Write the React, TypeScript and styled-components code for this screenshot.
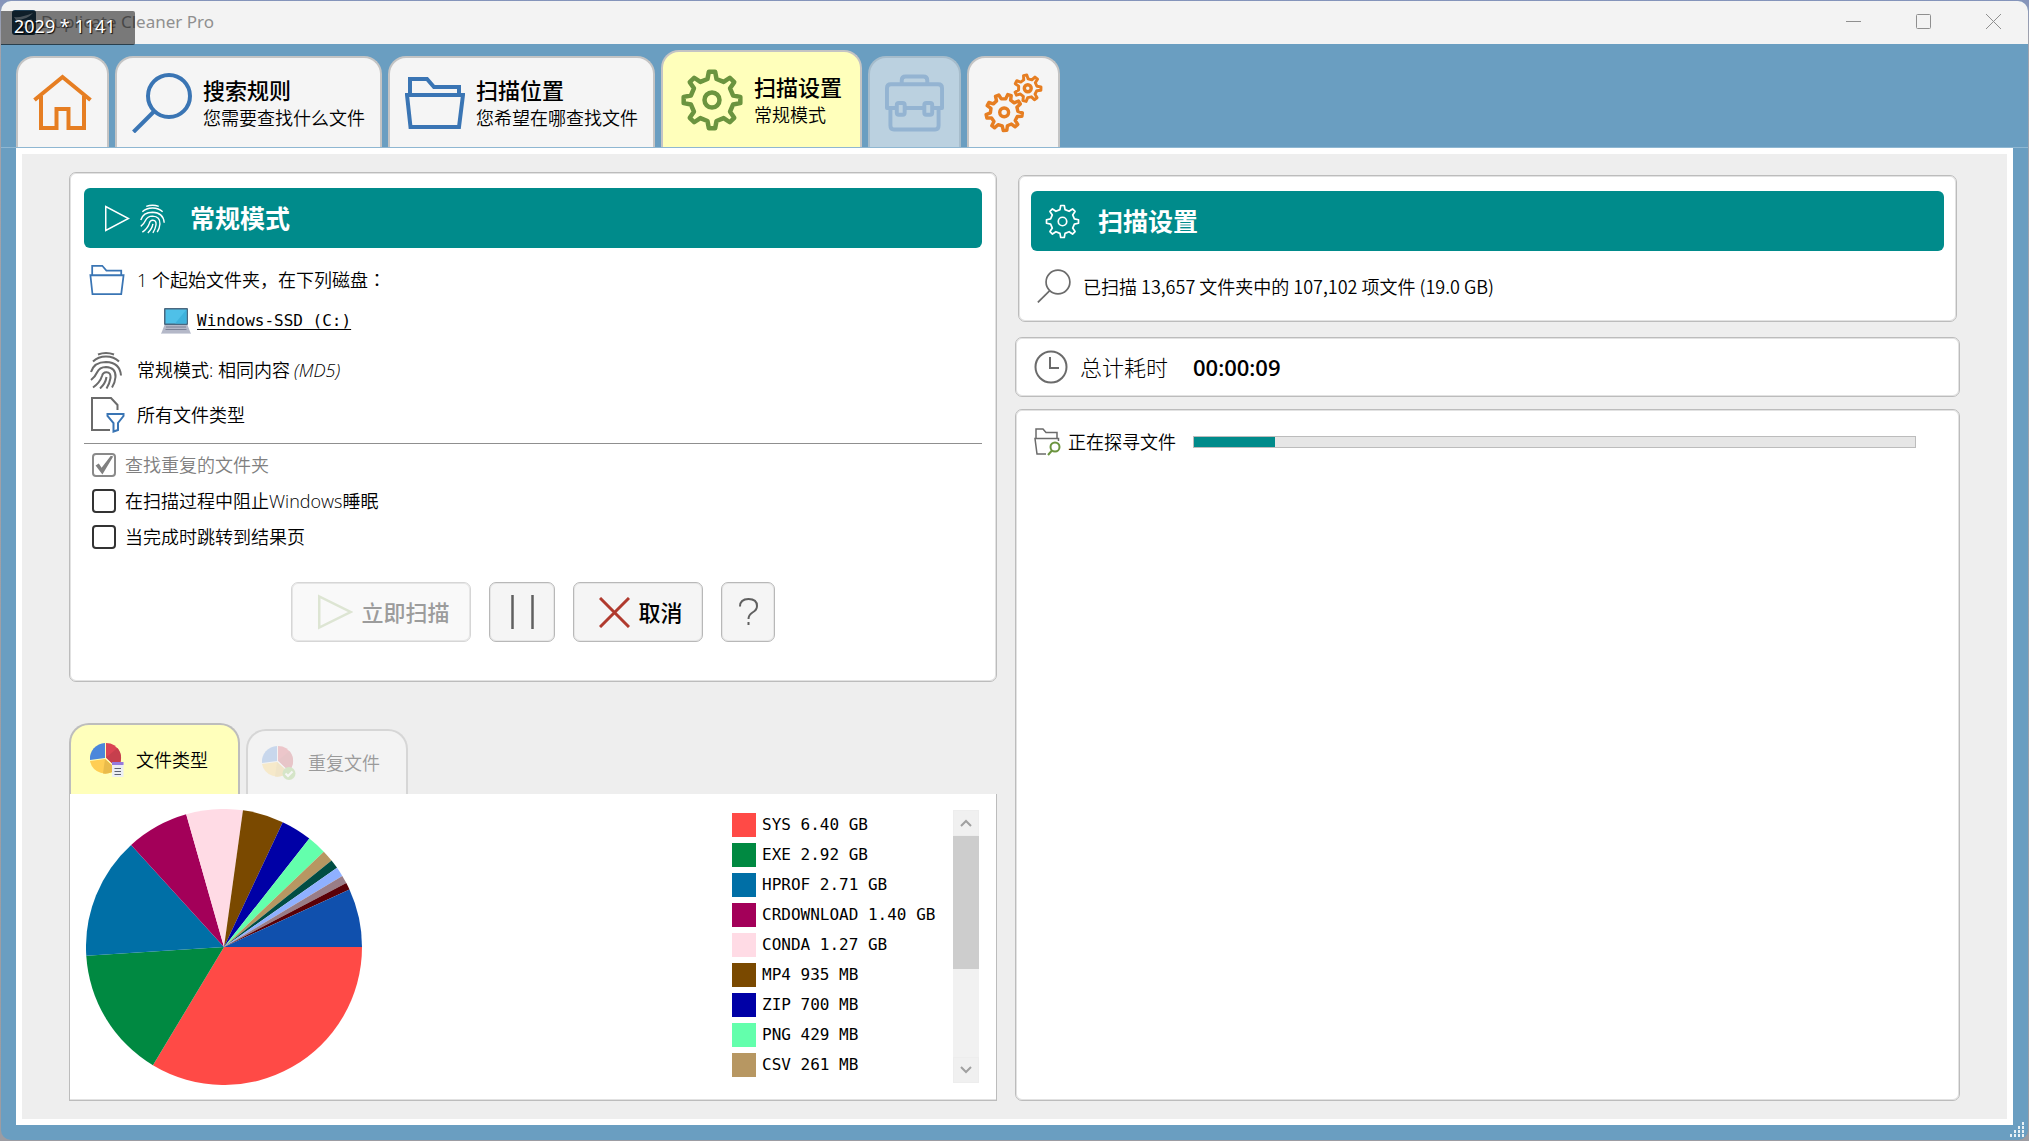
import React from "react";
import styled, { createGlobalStyle, css } from "styled-components";

const TEAL = "#008b8b";
const BLUE = "#3a75b4";
const ORANGE = "#e67e22";
const GREEN = "#6b943f";
const GREY = "#6b6b6b";

const GlobalStyle = createGlobalStyle`
  *, *::before, *::after { box-sizing: border-box; }
  body {
    margin: 0;
    font-family: "Open Sans", "Noto Sans CJK SC", sans-serif;
    font-size: 18px;
    font-weight: 350;
    line-height: 24px;
    color: #000;
  }
  button, input, progress { margin: 0; font: inherit; color: inherit; }
  svg { display: block; flex: none; }
`;

/* ---------- shell ---------- */

const Desktop = styled.div`
  min-height: 100vh;
  padding: 1px;
  display: flex;
  background: linear-gradient(#8494bb, #a3a3ab 40px, #9c9ca2);
`;

const AppWindow = styled.div`
  position: relative;
  flex: 1;
  display: flex;
  flex-direction: column;
  border-radius: 10px;
  overflow: hidden;
  background: #6a9ec1;
`;

const TitleBar = styled.header`
  height: 43px;
  display: flex;
  align-items: center;
  padding-left: 11px;
  background: #f3f3f3;
  color: #8f8f8f;
`;

const TitleText = styled.span`
  flex: 1;
  margin-left: 5px;
  padding-bottom: 2px;
  font-family: "Noto Sans", sans-serif;
  font-size: 17px;
  font-weight: 400;
`;

const CaptionButton = styled.button`
  width: 70px;
  height: 43px;
  padding: 0 0 2px;
  border: 0;
  display: flex;
  align-items: center;
  justify-content: center;
  background: transparent;
  color: #8f8f8f;
`;

const SizeBadge = styled.div`
  position: absolute;
  left: -1px;
  top: 10px;
  width: 135px;
  height: 34px;
  padding-left: 14px;
  border-radius: 0 2px 2px 0;
  background: rgba(0, 0, 0, 0.5);
  box-shadow: inset 0 -1px 0 rgba(0, 0, 0, 0.2);
  color: #fff;
  font-family: "Noto Sans", sans-serif;
  font-size: 18px;
  font-weight: 400;
  line-height: 31px;
  text-shadow: 1px 1px 1px #000;
`;

const Grip = styled.svg`
  position: absolute;
  right: 3px;
  bottom: 2px;
`;

/* ---------- main tabs ---------- */

const TabBar = styled.nav`
  height: 104px;
  padding: 0 15px;
  display: flex;
  align-items: flex-end;
  gap: 6px;
  border-bottom: 1px solid #8fb7d2;
`;

const MainTab = styled.button<{ $active?: boolean }>`
  height: ${(p) => (p.$active ? 97 : 91)}px;
  padding: 0 ${(p) => (p.$active ? 18 : 15)}px;
  display: flex;
  align-items: center;
  gap: 11px;
  border: 2px solid #c4c4c4;
  border-bottom: 0;
  border-radius: 18px 18px 0 0;
  background: ${(p) => (p.$active ? "#ffffbb" : "#f5f5f5")};
  text-align: left;
  &:disabled {
    background: #bbd1e0;
    border-color: #a6bccb;
  }
`;

const TabTitle = styled.strong`
  display: block;
  font-size: 22px;
  line-height: 28px;
  font-weight: 500;
`;

const TabNote = styled.span`
  display: block;
  margin-top: 2px;
`;

/* ---------- page ---------- */

const Page = styled.main`
  flex: 1;
  margin: 0 15px 15px;
  border: 6px solid #fff;
  padding: 18px 47px;
  display: grid;
  grid-template-columns: 928fr 945fr;
  gap: 18px;
  background: #eee;
`;

const Column = styled.div<{ $inset?: boolean }>`
  min-width: 0;
  display: flex;
  flex-direction: column;
  padding-top: ${(p) => (p.$inset ? 3 : 0)}px;
`;

const cardBorder = css`
  border: 1px solid #bcbcbc;
  box-shadow: inset 0 0 0 1px #e2e2e2;
`;

const Card = styled.section`
  ${cardBorder}
  border-radius: 7px;
  background: #fff;
`;

const ModeCard = styled(Card)`
  padding: 15px 14px 39px;
`;

const SummaryCard = styled(Card)`
  height: 147px;
  margin: 0 3px 15px;
  padding: 15px 12px;
`;

const TimeCard = styled(Card)`
  height: 60px;
  margin-bottom: 12px;
  padding-left: 18px;
  display: flex;
  align-items: center;
  font-size: 22px;
`;

const ProgressCard = styled(Card)`
  flex: 1;
  padding: 16px 43px 0 18px;
`;

const Banner = styled.h2<{ $gap: number }>`
  height: 60px;
  margin: 0;
  padding-left: ${(p) => p.$gap}px;
  display: flex;
  align-items: center;
  border-radius: 6px;
  background: ${TEAL};
  color: #fff;
  font-size: 25px;
  font-weight: 600;
  svg + svg { margin-left: 10px; }
`;

const BannerText = styled.span<{ $gap: number }>`
  margin-left: ${(p) => p.$gap}px;
`;

const InfoList = styled.div`
  padding: 9px 0 6px 5px;
  border-bottom: 1px solid #8f8f8f;
`;

const InfoRow = styled.div`
  height: 45px;
  display: flex;
  align-items: center;
`;

const DriveRow = styled.div`
  height: 38px;
  padding: 0 0 0 72px;
  margin-bottom: 7px;
  display: flex;
  align-items: center;
  gap: 6px;
`;

const DriveLink = styled.a`
  color: #000;
  font-family: "DejaVu Sans Mono", monospace;
  font-size: 16px;
  text-decoration: underline;
  text-underline-offset: 3px;
`;

const IconSlot = styled.span<{ $w: number }>`
  width: ${(p) => p.$w}px;
  flex: none;
`;

const Colon = styled.span`
  font-family: "Noto Sans CJK TC", sans-serif;
`;

const Algo = styled.em`
  margin-left: 4px;
`;

const Options = styled.div`
  padding: 3px 0 27px 8px;
`;

const Option = styled.label<{ $off?: boolean }>`
  height: 36px;
  display: flex;
  align-items: center;
  gap: 9px;
  color: ${(p) => (p.$off ? "#808080" : "#000")};
`;

const CheckBox = styled.input`
  appearance: none;
  width: 24px;
  height: 24px;
  border: 2px solid #333;
  border-radius: 4px;
  background: #fff;
  &:disabled { border-color: #8a8a8a; }
  &:checked::before {
    content: "";
    display: block;
    width: 20px;
    height: 20px;
    background: #808080;
    clip-path: polygon(8% 52%, 24% 42%, 38% 64%, 84% 4%, 96% 8%, 42% 98%);
  }
`;

const ButtonRow = styled.div`
  display: flex;
  justify-content: center;
  gap: 18px;
`;

const ToolButton = styled.button<{ $w: number }>`
  width: ${(p) => p.$w}px;
  height: 60px;
  padding: 0;
  display: flex;
  align-items: center;
  justify-content: center;
  gap: 8px;
  border: 1px solid #b8b8b8;
  border-radius: 7px;
  background: #f5f5f5;
  box-shadow: inset 0 0 0 1px #e6e6e6;
  font-size: 22px;
  font-weight: 500;
  &:disabled {
    border-color: #d6d6d6;
    background: #f9f9f9;
    color: #9c9c9c;
  }
`;

const LabelledButton = styled(ToolButton)`
  padding-left: 6px;
`;

/* ---------- lower tabs ---------- */

const ChartTabs = styled.div`
  margin-top: 41px;
  display: flex;
  align-items: flex-end;
  gap: 6px;
`;

const ChartTab = styled.button<{ $active?: boolean }>`
  height: ${(p) => (p.$active ? 71 : 65)}px;
  width: ${(p) => (p.$active ? 171 : 162)}px;
  padding: 0 0 0 ${(p) => (p.$active ? 19 : 14)}px;
  display: flex;
  align-items: center;
  gap: 12px;
  border: 2px solid ${(p) => (p.$active ? "#bdbdbd" : "#d6d6d6")};
  border-bottom: 0;
  border-radius: 20px 20px 0 0;
  background: ${(p) => (p.$active ? "#ffffbb" : "#f3f3f3")};
  &:disabled { color: #9a9a9a; }
  &:disabled svg { opacity: 0.25; }
`;

const ChartPanel = styled.section`
  ${cardBorder}
  flex: 1;
  border-top: 0;
  padding: 15px 17px 15px 16px;
  display: flex;
  background: #fff;
  box-shadow: inset 0 -1px 0 #e2e2e2;
`;

const Legend = styled.ul`
  width: 221px;
  height: 273px;
  margin: 1px 0 0 auto;
  padding: 3px 0 0;
  list-style: none;
  overflow: hidden;
  font-family: "DejaVu Sans Mono", monospace;
  font-size: 16px;
`;

const LegendItem = styled.li`
  height: 30px;
  display: flex;
  gap: 6px;
  white-space: nowrap;
`;

const Swatch = styled.span<{ $color: string }>`
  width: 24px;
  height: 24px;
  background: ${(p) => p.$color};
`;

const ScrollTrack = styled.div`
  width: 26px;
  height: 273px;
  margin-top: 1px;
  display: flex;
  flex-direction: column;
  background: #f1f1f1;
`;

const ScrollArrow = styled.button`
  height: 26px;
  padding: 0;
  border: 1px solid #ededed;
  display: flex;
  align-items: center;
  justify-content: center;
  background: #f0f0f0;
`;

const ScrollThumb = styled.div`
  height: 133px;
  margin-bottom: auto;
  background: #cdcdcd;
`;

/* ---------- right column ---------- */

const SummaryRow = styled.div`
  height: 70px;
  padding-left: 6px;
  display: flex;
  align-items: center;
  gap: 12px;
  font-family: "Noto Sans CJK SC", sans-serif;
`;

const TimeLabel = styled.span`
  width: 113px;
  margin-left: 12px;
  font-weight: 300;
`;

const TimeValue = styled.strong`
  font-weight: 600;
`;

const ProgressRow = styled.label`
  height: 32px;
  display: flex;
  align-items: center;
`;

const ProgressText = styled.span`
  width: 125px;
  margin-left: 7px;
  white-space: nowrap;
`;

const Bar = styled.progress`
  appearance: none;
  flex: 1;
  min-width: 0;
  height: 12px;
  border: 0;
  &::-webkit-progress-bar {
    border: 1px solid #bcbcbc;
    background: #e6e6e6;
  }
  &::-webkit-progress-value { background: ${TEAL}; }
`;

/* ---------- icons ---------- */

function gearPath(cx: number, cy: number, outer: number, inner: number, teeth: number, turn = 0) {
  const step = (Math.PI * 2) / teeth;
  const pts: string[] = [];
  for (let i = 0; i < teeth; i++) {
    const a = -Math.PI / 2 + turn + i * step;
    const spots: [number, number][] = [
      [inner, -0.27],
      [outer, -0.14],
      [outer, 0.14],
      [inner, 0.27],
    ];
    spots.forEach(([r, o]) =>
      pts.push(`${(cx + r * Math.cos(a + o * step)).toFixed(2)} ${(cy + r * Math.sin(a + o * step)).toFixed(2)}`)
    );
  }
  return `M${pts.join("L")}Z`;
}

const HomeIcon = () => (
  <svg width="59" height="58" viewBox="0 0 58 58" fill="none" stroke={ORANGE} strokeWidth="4">
    <path d="M1 26 29 3 57 26" />
    <path d="M7.500 22V54H23V35H35V54H50.500V22" />
  </svg>
);

const SearchIcon = ({ size, color, stroke }: { size: number; color: string; stroke: number }) => (
  <svg width={size} height={size} viewBox="0 0 60 60" fill="none" stroke={color} strokeWidth={stroke}>
    <circle cx="37" cy="23" r="21" />
    <path d="M22.500 38 1.500 59" />
  </svg>
);

const FolderIcon = ({ w, h, stroke }: { w: number; h: number; stroke: number }) => (
  <svg width={w} height={h} viewBox="0 0 60 54" fill="none" stroke={BLUE} strokeWidth={stroke}>
    <path d="M5 19V3H22L29 11H54V19" />
    <path d="M2 19H58L54 51H5.500Z" />
  </svg>
);

const GearIcon = ({ size, color, stroke }: { size: number; color: string; stroke: number }) => (
  <svg width={size} height={size} viewBox="0 0 62 62" fill="none" stroke={color} strokeWidth={stroke} strokeLinejoin="round">
    <path d={gearPath(31, 31, 28.5, 21.500, 8)} />
    <circle cx="31" cy="31" r="7.500" />
  </svg>
);

const GearsIcon = () => (
  <svg width="59" height="60" viewBox="0 0 60 60" fill="none" stroke={ORANGE} strokeWidth="3.500" strokeLinejoin="round">
    <path d={gearPath(20.500, 39.500, 18.500, 14, 9, 0.3)} />
    <circle cx="20.500" cy="39.500" r="4.500" />
    <path d={gearPath(44.500, 15, 13.500, 9.500, 7, -0.2)} strokeWidth="3" />
    <circle cx="44.500" cy="15" r="3.500" />
  </svg>
);

const BriefcaseIcon = () => (
  <svg width="59" height="58" viewBox="0 0 60 58" fill="none" stroke="#94b4d2" strokeWidth="4" strokeLinejoin="round">
    <path d="M17 10V6Q17 2 21 2H39Q43 2 43 6V10" />
    <path d="M11 34H2V14Q2 10 6 10H54Q58 10 58 14V34H49M21 34H39" />
    <rect x="12" y="29" width="8" height="12" rx="2" />
    <rect x="40" y="29" width="8" height="12" rx="2" />
    <path d="M5.500 34V52Q5.500 56 9 56H51Q54.500 56 54.500 52V34" />
  </svg>
);

const FingerprintIcon = ({ w, h, color, stroke }: { w: number; h: number; color: string; stroke: number }) => (
  <svg width={w} height={h} viewBox="0 0 32 38" fill="none" stroke={color} strokeWidth={stroke}>
    <path d="M8 3.500Q16 .5 24 3.500" />
    <path d="M3 10.500Q8 5.500 16 5.500 24 5.500 29 10.500" />
    <path d="M1 21Q4 11 16 11 30 11.500 31 24.500" />
    <path d="M1 29Q5 26 7 21.500 9.500 16 16 16 26 16.500 25.500 26 25 32 22 36.500" />
    <path d="M3 36.500Q10 31.500 12 25 13 21 16.500 21.200 21 21.500 20.500 27 19.500 33 16.500 37.500" />
    <path d="M16.500 26Q15.500 32.500 10 37.500" />
  </svg>
);

const PlayIcon = ({ w, h, color, stroke }: { w: number; h: number; color: string; stroke: number }) => (
  <svg width={w} height={h} viewBox={`0 0 ${w} ${h}`} fill="none" stroke={color} strokeWidth={stroke}>
    <path d={`M${stroke / 2} ${stroke}V${h - stroke}L${w - stroke} ${h / 2}Z`} />
  </svg>
);

const LaptopIcon = () => (
  <svg width="30" height="26" viewBox="0 0 30 26">
    <rect x="3" y="0" width="24" height="17" rx="1" fill="#4a6880" />
    <rect x="4.500" y="1.500" width="21" height="14" fill="#4fc0e8" />
    <path d="M25.500 1.500V15.500H14Z" fill="#3fb2dc" />
    <path d="M3.500 17H26.500L30 26H0Z" fill="#b4b8c8" />
    <path d="M5 19H25M4.500 21.500H25.500" stroke="#7c8296" />
    <path d="M0 25.500H30" stroke="#d3d6e0" />
  </svg>
);

const FileFilterIcon = () => (
  <svg width="36" height="38" viewBox="0 0 36 38" fill="none" strokeWidth="2">
    <path d="M21 34H3V2H22L28.500 9V14" stroke={GREY} />
    <path d="M18.500 18H34.500V20L29 27V34L24.500 35.500V27L18.500 20Z" stroke={BLUE} />
  </svg>
);

const FolderSearchIcon = () => (
  <svg width="27" height="28" viewBox="0 0 27 28" fill="none" stroke={GREY} strokeWidth="1.500">
    <path d="M2 10V1H9L12 4.500H23V10" />
    <path d="M12 26H3L1 10.500H24.500V13" />
    <circle cx="21" cy="19" r="4.500" stroke={GREEN} strokeWidth="2" />
    <path d="M18 22.500 14 27" stroke={GREEN} strokeWidth="2" />
  </svg>
);

const ClockIcon = () => (
  <svg width="34" height="34" viewBox="0 0 34 34" fill="none" stroke={GREY} strokeWidth="2">
    <circle cx="17" cy="17" r="15.500" />
    <path d="M16 7V18H25" />
  </svg>
);

const MiniPie = ({ badge }: { badge: "list" | "check" }) => (
  <svg width="34" height="36" viewBox="0 0 34 36">
    <path d="M15 16V1A15.500 15.500 0 0 0 0 18Z" fill="#4b87db" />
    <path d="M16 15.500V1A15 15 0 0 1 27 26Z" fill="#da4453" />
    <path d="M16 15.500 27.500 6A15 15 0 0 1 27 26Z" fill="#c63f4d" />
    <path d="M15 17 0 19A15.500 15.500 0 0 0 26 27Z" fill="#ffce54" />
    <path d="M15 17 13 31.500A15.500 15.500 0 0 0 26 27Z" fill="#e9bb4b" />
    {badge === "list" ? (
      <g>
        <rect x="22" y="20" width="11.500" height="15" fill="#eceef3" />
        <rect x="22" y="20" width="11.500" height="3" fill="#967adc" />
        <path d="M24.500 26.500H31M24.500 29.500H31M24.500 32.500H31" stroke="#5d6270" />
      </g>
    ) : (
      <g>
        <circle cx="27" cy="28.500" r="6.500" fill="#7fbf4d" />
        <path d="M23.500 28.500 26 31 30.500 26.500" fill="none" stroke="#fff" strokeWidth="2" />
      </g>
    )}
  </svg>
);

const AppIcon = () => (
  <svg width="24" height="25" viewBox="0 0 24 25">
    <rect width="24" height="25" rx="3" fill="#1d3c52" />
    <path d="M2 7Q9 8 21 3Q15 10 4 10ZM5 12Q12 13 20 9Q16 15 8 15ZM10 17Q17 16 20 13Q20 20 13 23Q17 18 10 17Z" fill="#8fa3b1" />
  </svg>
);

/* ---------- chart ---------- */

const SLICES: [string, number][] = [
  ["#ff4a46", 121],
  ["#008941", 176.4],
  ["#006fa6", 227.7],
  ["#a30059", 254.1],
  ["#ffdbe5", 277.9],
  ["#7a4900", 295.2],
  ["#0000a6", 308.2],
  ["#63ffac", 316.3],
  ["#b79762", 321.2],
  ["#004d43", 325],
  ["#8fb0ff", 329],
  ["#997d87", 332.4],
  ["#5a0007", 335.4],
  ["#1050ad", 360],
];

const TYPES = [
  "SYS 6.40 GB",
  "EXE 2.92 GB",
  "HPROF 2.71 GB",
  "CRDOWNLOAD 1.40 GB",
  "CONDA 1.27 GB",
  "MP4 935 MB",
  "ZIP 700 MB",
  "PNG 429 MB",
  "CSV 261 MB",
];

function PieChart() {
  const r = 138;
  const at = (deg: number) => {
    const a = (deg * Math.PI) / 180;
    return `${(r + r * Math.cos(a)).toFixed(2)} ${(r + r * Math.sin(a)).toFixed(2)}`;
  };
  return (
    <svg width="276" height="276" viewBox="0 0 276 276" role="img" aria-label="文件类型">
      {SLICES.map(([color, end], i) => {
        const start = i === 0 ? 0 : SLICES[i - 1][1];
        return <path key={color} fill={color} d={`M${r} ${r}L${at(start)}A${r} ${r} 0 0 1 ${at(end)}Z`} />;
      })}
    </svg>
  );
}

/* ---------- app ---------- */

export default function App() {
  return (
    <Desktop>
      <GlobalStyle />
      <AppWindow>
        <TitleBar>
          <AppIcon />
          <TitleText>Duplicate Cleaner Pro</TitleText>
          <CaptionButton aria-label="最小化">
            <svg width="15" height="15" viewBox="0 0 15 15" stroke="currentColor"><path d="M0 7.500H15" /></svg>
          </CaptionButton>
          <CaptionButton aria-label="最大化">
            <svg width="15" height="15" viewBox="0 0 15 15" stroke="currentColor" fill="none"><rect x=".5" y=".5" width="14" height="14" rx="1" /></svg>
          </CaptionButton>
          <CaptionButton aria-label="关闭">
            <svg width="15" height="15" viewBox="0 0 15 15" stroke="currentColor"><path d="M0 0 15 15M15 0 0 15" /></svg>
          </CaptionButton>
        </TitleBar>

        <TabBar>
          <MainTab aria-label="主页"><HomeIcon /></MainTab>
          <MainTab>
            <SearchIcon size={60} color={BLUE} stroke={4} />
            <span>
              <TabTitle>搜索规则</TabTitle>
              <TabNote>您需要查找什么文件</TabNote>
            </span>
          </MainTab>
          <MainTab>
            <FolderIcon w={60} h={54} stroke={4} />
            <span>
              <TabTitle>扫描位置</TabTitle>
              <TabNote>您希望在哪查找文件</TabNote>
            </span>
          </MainTab>
          <MainTab $active>
            <GearIcon size={62} color={GREEN} stroke={4.5} />
            <span>
              <TabTitle>扫描设置</TabTitle>
              <TabNote>常规模式</TabNote>
            </span>
          </MainTab>
          <MainTab disabled aria-label="结果"><BriefcaseIcon /></MainTab>
          <MainTab aria-label="选项"><GearsIcon /></MainTab>
        </TabBar>

        <Page>
          <Column>
            <ModeCard>
              <Banner $gap={21}>
                <PlayIcon w={25} h={27} color="#fff" stroke={1.5} />
                <FingerprintIcon w={25} h={31} color="#fff" stroke={1.800} />
                <BannerText $gap={25}>常规模式</BannerText>
              </Banner>
              <InfoList>
                <InfoRow>
                  <IconSlot $w={48}><FolderIcon w={36} h={32} stroke={3} /></IconSlot>
                  <span>1 个起始文件夹，在下列磁盘<Colon>：</Colon></span>
                </InfoRow>
                <DriveRow>
                  <LaptopIcon />
                  <DriveLink href="#c">Windows-SSD (C:)</DriveLink>
                </DriveRow>
                <InfoRow>
                  <IconSlot $w={48}><FingerprintIcon w={34} h={38} color={GREY} stroke={2} /></IconSlot>
                  <span>常规模式: 相同内容<Algo>(MD5)</Algo></span>
                </InfoRow>
                <InfoRow>
                  <IconSlot $w={48}><FileFilterIcon /></IconSlot>
                  <span>所有文件类型</span>
                </InfoRow>
              </InfoList>
              <Options>
                <Option $off><CheckBox type="checkbox" defaultChecked disabled />查找重复的文件夹</Option>
                <Option><CheckBox type="checkbox" />在扫描过程中阻止Windows睡眠</Option>
                <Option><CheckBox type="checkbox" />当完成时跳转到结果页</Option>
              </Options>
              <ButtonRow>
                <LabelledButton $w={180} disabled>
                  <PlayIcon w={35} h={36} color="#dde5d3" stroke={2.5} />
                  立即扫描
                </LabelledButton>
                <ToolButton $w={66} aria-label="暂停">
                  <svg width="23" height="34" viewBox="0 0 23 34" stroke="#606060" strokeWidth="2.500"><path d="M1.500 0V34M21.500 0V34" /></svg>
                </ToolButton>
                <LabelledButton $w={130}>
                  <svg width="31" height="31" viewBox="0 0 31 31" stroke="#b03a2e" strokeWidth="3"><path d="M1 1 30 30M30 1 1 30" /></svg>
                  取消
                </LabelledButton>
                <ToolButton $w={54} aria-label="帮助">
                  <svg width="19" height="28" viewBox="0 0 19 28" fill="none" stroke="#606060" strokeWidth="2">
                    <path d="M1 8.500Q1 1 9.500 1 18 1 18 8 18 12 13.500 14.500 9.500 17 9.500 21M9.500 24V27" />
                  </svg>
                </ToolButton>
              </ButtonRow>
            </ModeCard>

            <ChartTabs>
              <ChartTab $active><MiniPie badge="list" />文件类型</ChartTab>
              <ChartTab disabled><MiniPie badge="check" />重复文件</ChartTab>
            </ChartTabs>
            <ChartPanel>
              <PieChart />
              <Legend>
                {TYPES.map((text, i) => (
                  <LegendItem key={text}>
                    <Swatch $color={SLICES[i][0]} />
                    {text}
                  </LegendItem>
                ))}
              </Legend>
              <ScrollTrack>
                <ScrollArrow aria-label="向上滚动">
                  <svg width="12" height="8" viewBox="0 0 12 8" fill="none" stroke="#a0a0a0" strokeWidth="2"><path d="M1 7 6 2 11 7" /></svg>
                </ScrollArrow>
                <ScrollThumb />
                <ScrollArrow aria-label="向下滚动">
                  <svg width="12" height="8" viewBox="0 0 12 8" fill="none" stroke="#a0a0a0" strokeWidth="2"><path d="M1 1 6 6 11 1" /></svg>
                </ScrollArrow>
              </ScrollTrack>
            </ChartPanel>
          </Column>

          <Column $inset>
            <SummaryCard>
              <Banner $gap={14}>
                <GearIcon size={35} color="#fff" stroke={3} />
                <BannerText $gap={18}>扫描设置</BannerText>
              </Banner>
              <SummaryRow>
                <SearchIcon size={34} color={GREY} stroke={3} />
                <span>已扫描 13,657 文件夹中的 107,102 项文件 (19.0 GB)</span>
              </SummaryRow>
            </SummaryCard>
            <TimeCard>
              <ClockIcon />
              <TimeLabel>总计耗时</TimeLabel>
              <TimeValue>00:00:09</TimeValue>
            </TimeCard>
            <ProgressCard>
              <ProgressRow>
                <FolderSearchIcon />
                <ProgressText>正在探寻文件</ProgressText>
                <Bar max={723} value={81} />
              </ProgressRow>
            </ProgressCard>
          </Column>
        </Page>

        <SizeBadge>2029 * 1141</SizeBadge>
        <Grip width="16" height="16" viewBox="0 0 16 16" fill="#fff" fillOpacity="0.85">
          {[[13, 0], [9, 4], [13, 4], [5, 8], [9, 8], [13, 8], [1, 12], [5, 12], [9, 12], [13, 12]].map(([x, y]) => (
            <rect key={`${x}-${y}`} x={x} y={y} width="2" height="3" />
          ))}
        </Grip>
      </AppWindow>
    </Desktop>
  );
}
